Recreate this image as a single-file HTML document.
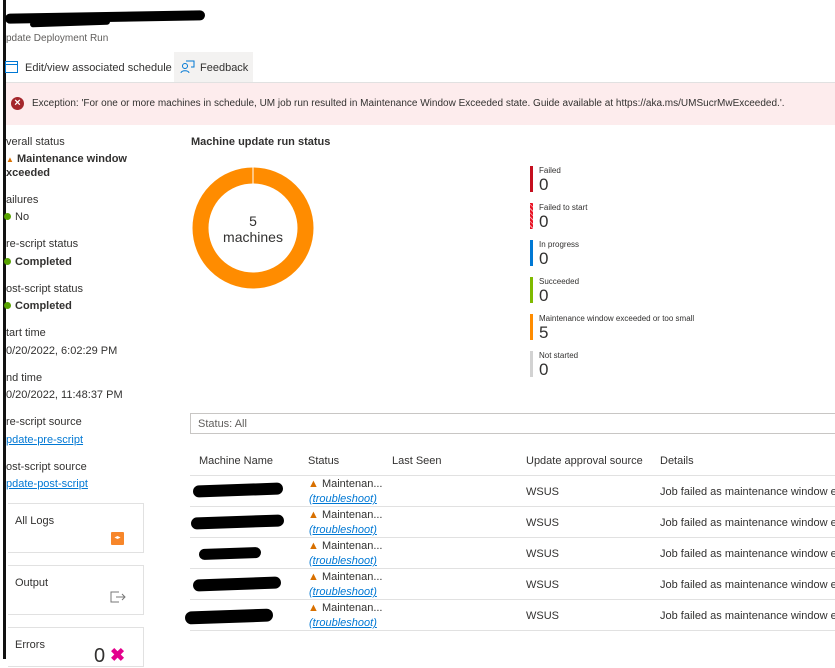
<!DOCTYPE html>
<html><head><style>
*{margin:0;padding:0;box-sizing:border-box}
body{width:835px;height:659px;overflow:hidden;background:#fff;font-family:"Liberation Sans",sans-serif;font-size:11px;color:#323130;position:relative}
.a{position:absolute;white-space:nowrap}
.lbl{color:#323130}
.b{font-weight:bold}
.link{color:#0078d4;text-decoration:underline}
.dot{display:inline-block;width:7px;height:7px;border-radius:50%;background:#57a300;margin-right:4px;vertical-align:0}
.card{position:absolute;left:8px;width:136px;height:50px;border:1px solid #e1e1e1;border-left:none}
.lg{position:absolute;left:530px;width:3px;height:26px}
.lgt{position:absolute;left:539px;font-size:8px;color:#323130}
.lgn{position:absolute;left:539px;font-size:17px;color:#323130}
.row{position:absolute;left:190px;width:645px;border-top:1px solid #e1e1e1}
.scrib{position:absolute;background:#000;border-radius:8px;transform:rotate(-2deg)}
.warn{color:#d87000;font-size:11px}
</style></head><body>
<div class="a" style="left:3px;top:0;width:3px;height:659px;background:#111"></div>
<div class="scrib" style="left:5px;top:12px;width:200px;height:10px;transform:rotate(-1deg)"></div>
<div class="scrib" style="left:30px;top:20px;width:80px;height:6px"></div>
<div class="a" style="left:6px;top:33px;font-size:10px;color:#605e5c">pdate Deployment Run</div>
<div class="a" style="left:174px;top:52px;width:79px;height:30px;background:#f3f2f1"></div>
<svg class="a" style="left:5px;top:60px" width="14" height="13"><rect x="0.5" y="1.5" width="12" height="11" fill="none" stroke="#0078d4"/><line x1="0" y1="4.5" x2="13" y2="4.5" stroke="#0078d4"/></svg>
<div class="a" style="left:25px;top:62px;font-size:11px">Edit/view associated schedule</div>
<svg class="a" style="left:180px;top:60px" width="15" height="14"><circle cx="5" cy="6" r="2.5" fill="none" stroke="#0078d4"/><path d="M1 13c0-3 8-3 8 0M6 1h8v6h-3" fill="none" stroke="#0078d4"/></svg>
<div class="a" style="left:200px;top:62px">Feedback</div>
<div class="a" style="left:6px;top:82px;width:829px;height:43px;background:#fdeced;border-top:1px solid #e1e1e1"></div>
<div class="a" style="left:11px;top:97px;width:13px;height:13px;border-radius:50%;background:#a4262c;color:#fff;font-size:11px;line-height:13px;text-align:center;font-weight:bold">×</div>
<div class="a" style="left:32px;top:98px;font-size:10px">Exception: 'For one or more machines in schedule, UM job run resulted in Maintenance Window Exceeded state. Guide available at https://aka.ms/UMSucrMwExceeded.'.</div>

<div class="a lbl" style="left:6px;top:136px">verall status</div>
<div class="a b" style="left:6px;top:153px"><span style="color:#d87000;font-size:8px">▲</span> Maintenance window</div>
<div class="a b" style="left:6px;top:167px">xceeded</div>
<div class="a" style="left:6px;top:194px">ailures</div>
<div class="a" style="left:4px;top:211px"><span class="dot"></span>No</div>
<div class="a" style="left:6px;top:238px">re-script status</div>
<div class="a b" style="left:4px;top:256px"><span class="dot"></span>Completed</div>
<div class="a" style="left:6px;top:283px">ost-script status</div>
<div class="a b" style="left:4px;top:300px"><span class="dot"></span>Completed</div>
<div class="a" style="left:6px;top:327px">tart time</div>
<div class="a" style="left:6px;top:345px">0/20/2022, 6:02:29 PM</div>
<div class="a" style="left:6px;top:372px">nd time</div>
<div class="a" style="left:6px;top:389px">0/20/2022, 11:48:37 PM</div>
<div class="a" style="left:6px;top:416px">re-script source</div>
<div class="a link" style="left:6px;top:434px">pdate-pre-script</div>
<div class="a" style="left:6px;top:461px">ost-script source</div>
<div class="a link" style="left:6px;top:478px">pdate-post-script</div>

<div class="card" style="top:503px"></div>
<div class="a" style="left:15px;top:515px">All Logs</div>
<div class="a" style="left:111px;top:532px;width:13px;height:13px;background:#f7862a;border-radius:1px;color:#fff;font-size:6px;text-align:center;line-height:13px">◂▸</div>
<div class="card" style="top:565px"></div>
<div class="a" style="left:15px;top:577px">Output</div>
<svg class="a" style="left:110px;top:591px" width="16" height="12"><path d="M9 1H1v10h8M6 6h9M12 3l3 3-3 3" fill="none" stroke="#777"/></svg>
<div class="card" style="top:627px;height:40px"></div>
<div class="a" style="left:15px;top:639px">Errors</div>
<div class="a" style="left:94px;top:645px;font-size:20px">0</div>
<div class="a" style="left:110px;top:645px;font-size:18px;color:#e3008c;font-weight:bold">✖</div>

<div class="a b" style="left:191px;top:136px">Machine update run status</div>
<svg class="a" style="left:192px;top:167px" width="122" height="122"><circle cx="61" cy="61" r="52.5" fill="none" stroke="#ff8c00" stroke-width="16"/><line x1="61" y1="0" x2="61" y2="17" stroke="#fff" stroke-width="1"/></svg>
<div class="a" style="left:218px;top:213px;width:70px;text-align:center;font-size:14px;line-height:16px">5<br>machines</div>

<div class="lg" style="top:166px;background:#c50f1f"></div><div class="lgt" style="top:166px">Failed</div><div class="lgn" style="top:175px">0</div>
<div class="lg" style="top:203px;background:repeating-linear-gradient(45deg,#e81123 0 2px,#f7a1a8 2px 3px)"></div><div class="lgt" style="top:203px">Failed to start</div><div class="lgn" style="top:212px">0</div>
<div class="lg" style="top:240px;background:#0078d4"></div><div class="lgt" style="top:240px">In progress</div><div class="lgn" style="top:249px">0</div>
<div class="lg" style="top:277px;background:#7fba00"></div><div class="lgt" style="top:277px">Succeeded</div><div class="lgn" style="top:286px">0</div>
<div class="lg" style="top:314px;background:#ff8c00"></div><div class="lgt" style="top:314px">Maintenance window exceeded or too small</div><div class="lgn" style="top:323px">5</div>
<div class="lg" style="top:351px;background:#d2d2d2"></div><div class="lgt" style="top:351px">Not started</div><div class="lgn" style="top:360px">0</div>

<div class="a" style="left:190px;top:413px;width:650px;height:21px;border:1px solid #c8c6c4"></div>
<div class="a" style="left:198px;top:418px;color:#605e5c">Status: All</div>

<div class="a" style="left:199px;top:455px">Machine Name</div>
<div class="a" style="left:308px;top:455px">Status</div>
<div class="a" style="left:392px;top:455px">Last Seen</div>
<div class="a" style="left:526px;top:455px">Update approval source</div>
<div class="a" style="left:660px;top:455px">Details</div>
<div class="row" style="top:475px"></div>
<div class="row" style="top:506px"></div>
<div class="row" style="top:537px"></div>
<div class="row" style="top:568px"></div>
<div class="row" style="top:599px"></div>
<div class="row" style="top:630px"></div>

<div class="scrib" style="left:193px;top:484px;width:90px;height:12px"></div>
<div class="scrib" style="left:191px;top:516px;width:93px;height:12px"></div>
<div class="scrib" style="left:199px;top:548px;width:62px;height:11px"></div>
<div class="scrib" style="left:193px;top:578px;width:88px;height:12px"></div>
<div class="scrib" style="left:185px;top:610px;width:88px;height:13px"></div>

<div class="a" style="left:308px;top:478px"><span class="warn">▲</span> Maintenan...</div>
<div class="a link" style="left:309px;top:493px;font-style:italic">(troubleshoot)</div>
<div class="a" style="left:308px;top:509px"><span class="warn">▲</span> Maintenan...</div>
<div class="a link" style="left:309px;top:524px;font-style:italic">(troubleshoot)</div>
<div class="a" style="left:308px;top:540px"><span class="warn">▲</span> Maintenan...</div>
<div class="a link" style="left:309px;top:555px;font-style:italic">(troubleshoot)</div>
<div class="a" style="left:308px;top:571px"><span class="warn">▲</span> Maintenan...</div>
<div class="a link" style="left:309px;top:586px;font-style:italic">(troubleshoot)</div>
<div class="a" style="left:308px;top:602px"><span class="warn">▲</span> Maintenan...</div>
<div class="a link" style="left:309px;top:617px;font-style:italic">(troubleshoot)</div>

<div class="a" style="left:526px;top:486px">WSUS</div><div class="a" style="left:660px;top:486px">Job failed as maintenance window ex</div>
<div class="a" style="left:526px;top:517px">WSUS</div><div class="a" style="left:660px;top:517px">Job failed as maintenance window ex</div>
<div class="a" style="left:526px;top:548px">WSUS</div><div class="a" style="left:660px;top:548px">Job failed as maintenance window ex</div>
<div class="a" style="left:526px;top:579px">WSUS</div><div class="a" style="left:660px;top:579px">Job failed as maintenance window ex</div>
<div class="a" style="left:526px;top:610px">WSUS</div><div class="a" style="left:660px;top:610px">Job failed as maintenance window ex</div>
</body></html>
